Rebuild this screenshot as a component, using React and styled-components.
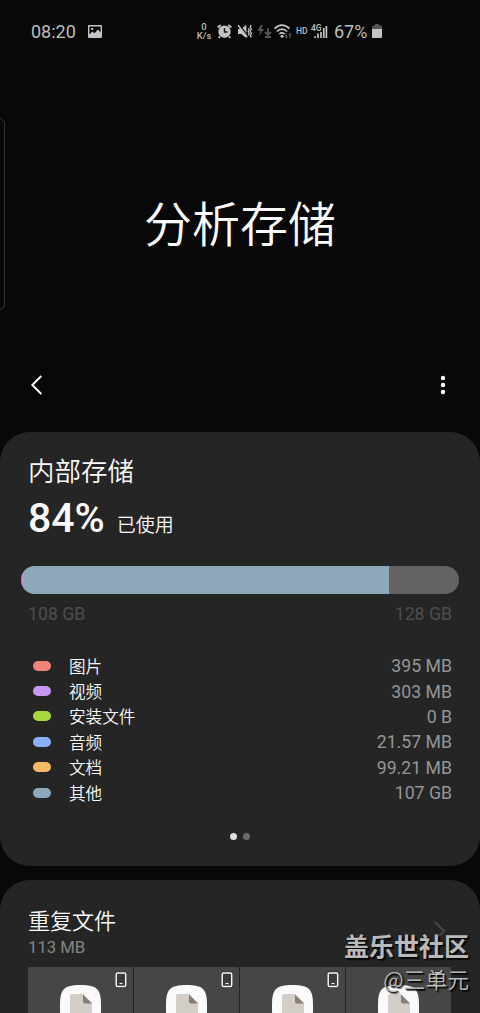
import React from 'react';
import styled, { createGlobalStyle } from 'styled-components';

const Global = createGlobalStyle`
  * { box-sizing: border-box; }
  html, body { margin: 0; background: #080808; }
  body { font-family: Roboto, "Noto Sans CJK SC", sans-serif; color: #fafafa; }
  svg { display: block; flex: none; }
`;

const Screen = styled.div`
  position: relative;
  width: 480px;
  height: 1013px;
  overflow: hidden;
  background: #080808;
  display: flex;
  flex-direction: column;
`;

const StatusBar = styled.header`
  height: 62px;
  flex: none;
  display: flex;
  align-items: center;
  padding-left: 31px;
  color: #bdbdbd;
`;

const StatusText = styled.span`
  width: ${(p) => p.$width}px;
  margin-left: ${(p) => p.$gap || 0}px;
  padding-top: 1px;
  font-size: 18px;
  line-height: 22px;
  white-space: nowrap;
`;

const StatusIcon = styled.svg`
  margin-left: ${(p) => p.$gap || 0}px;
  overflow: visible;
`;

const Speed = styled.span`
  width: 16px;
  margin-left: 94px;
  display: flex;
  flex-direction: column;
  align-items: center;
  font-size: 9.5px;
  line-height: 9px;
  font-weight: 500;
`;

const SpeedLine = styled.span`
  height: 9px;
  overflow: hidden;
`;

const HdLabel = styled.span`
  width: 13px;
  margin-left: 4px;
  font-size: 8.5px;
  line-height: 10px;
  font-weight: 500;
`;

const EdgeHandle = styled.div`
  position: absolute;
  left: -10px;
  top: 118px;
  width: 15px;
  height: 192px;
  border: 1px solid #353535;
  border-radius: 6px;
`;

const Hero = styled.div`
  height: 290px;
  flex: none;
  display: flex;
  justify-content: center;
  padding-top: 129px;
`;

const Title = styled.h1`
  margin: 0;
  font-size: 48px;
  line-height: 70px;
  font-weight: 350;
`;

const Toolbar = styled.nav`
  height: 80px;
  flex: none;
  display: flex;
  align-items: center;
  justify-content: space-between;
  padding: 0 33px 14px 30px;
`;

const Card = styled.section`
  flex: none;
  height: ${(p) => p.$height}px;
  margin-bottom: 14px;
  border-radius: 30px;
  background: #252525;
  padding: ${(p) => p.$top}px 28px 0;
  display: flex;
  flex-direction: column;
`;

const CardTitle = styled.h2`
  margin: 0;
  font-size: ${(p) => p.$size}px;
  line-height: 32px;
  font-weight: 350;
`;

const Usage = styled.div`
  display: flex;
  align-items: baseline;
  height: 55px;
  padding-top: 6px;
`;

const Percent = styled.span`
  font-size: 41px;
  line-height: 48px;
  font-weight: 500;
`;

const UsageNote = styled.span`
  margin-left: 12px;
  font-size: 19px;
  line-height: 24px;
  font-weight: 350;
`;

const Meter = styled.div`
  display: flex;
  flex: none;
  height: 28px;
  margin: 23px -7px 0;
  border-radius: 14px;
  overflow: hidden;
  background: #636363;
`;

const MeterPart = styled.div`
  width: ${(p) => p.$width}px;
  background: ${(p) => p.$color};
`;

const Scale = styled.div`
  display: flex;
  justify-content: space-between;
  margin-top: 9px;
  font-size: 17.7px;
  line-height: 22px;
  color: #4e4e4e;
`;

const Legend = styled.ul`
  list-style: none;
  margin: 28px 0 0;
  padding: 0;
`;

const LegendRow = styled.li`
  display: flex;
  align-items: center;
  height: 25.4px;
`;

const Swatch = styled.span`
  width: 18px;
  height: 10px;
  margin: 0 18px 0 5px;
  border-radius: 5px;
  background: ${(p) => p.$color};
`;

const LegendLabel = styled.span`
  flex: 1;
  padding-top: 4px;
  font-size: 16.6px;
  line-height: 24px;
  font-weight: 350;
`;

const LegendValue = styled.span`
  padding-top: 1px;
  font-size: 17.7px;
  line-height: 24px;
  color: #959595;
`;

const Pager = styled.div`
  display: flex;
  justify-content: center;
  gap: 6px;
  margin-top: 28px;
`;

const Dot = styled.span`
  width: 7px;
  height: 7px;
  border-radius: 50%;
  background: ${(p) => (p.$active ? '#dedede' : '#6b6b6b')};
`;

const CardHeader = styled.div`
  display: flex;
  flex: none;
  justify-content: space-between;
  height: 61px;
`;

const Chevron = styled.svg`
  margin-top: 15px;
`;

const SizeText = styled.div`
  font-size: 16.7px;
  line-height: 20px;
  color: #858585;
`;

const Tiles = styled.div`
  display: grid;
  grid-template-columns: repeat(4, 105px);
  column-gap: 1px;
`;

const Tile = styled.div`
  height: 105px;
  background: #464646;
  display: flex;
  justify-content: center;
  position: relative;
  padding-top: 18px;
`;

const Badge = styled.svg`
  position: absolute;
  top: 4px;
  right: 6px;
`;

const Watermark = styled.div`
  position: absolute;
  right: 11px;
  top: 928px;
  display: flex;
  flex-direction: column;
  align-items: flex-end;
  color: #bababa;
  text-shadow: 1px 1px 1px #000, 2px 2px 1px rgba(0, 0, 0, 0.6);
  font-family: "Noto Sans CJK SC", sans-serif;
  white-space: nowrap;
`;

const Community = styled.strong`
  font-size: 25px;
  line-height: 34px;
  font-weight: 700;
`;

const Author = styled.span`
  font-size: 21.8px;
  line-height: 33px;
  font-weight: 350;
`;

const legend = [
  ['图片', '395 MB', '#f18277'],
  ['视频', '303 MB', '#c798f0'],
  ['安装文件', '0 B', '#a7d83c'],
  ['音频', '21.57 MB', '#8ab0fa'],
  ['文档', '99.21 MB', '#f5ba66'],
  ['其他', '107 GB', '#8da8ba'],
];

function StatusIcons() {
  return (
    <>
      <StatusIcon $gap={13} width="14" height="13" viewBox="0 0 14 13">
        <path fillRule="evenodd" fill="#c4c4c4" d="M1 0h12q1 0 1 1v11q0 1-1 1H1q-1 0-1-1V1q0-1 1-1zM1.400 1.400v8.100l3.100-2.900 2 1.700 3.500-3.700 2.600 2.800v-6zM3.200 3h2v2h-2z" />
      </StatusIcon>
      <Speed><SpeedLine>0</SpeedLine><SpeedLine>K/s</SpeedLine></Speed>
      <StatusIcon $gap={5} width="15" height="15" viewBox="0 0 15 15">
        <circle cx="7.500" cy="7.700" r="6.200" fill="#c4c4c4" />
        <path d="M.7 3.400L3.700.9M14.300 3.400L11.300.9M3 12.300l-1.300 1.500M12 12.300l1.300 1.500" stroke="#c4c4c4" strokeWidth="1.900" />
        <path d="M7.500 4v4h3" fill="none" stroke="#161616" strokeWidth="1.400" />
      </StatusIcon>
      <StatusIcon $gap={6} width="15" height="15" viewBox="0 0 15 15">
        <path d="M0 5h3.300L8.400.8v13.400L3.300 10H0z" fill="#c4c4c4" />
        <path d="M1.200.5l8.500 11.500" stroke="#080808" strokeWidth="1.300" />
        <path d="M0 1.300l9.200 11.600" stroke="#c4c4c4" strokeWidth="1.500" />
        <path d="M10.200 4l1 1.500-1 2 1 2-1 1.800M13.200 1l-1 2 1.200 2-1.200 2.200 1.200 2.200-1.200 2 1.200 2" fill="none" stroke="#c4c4c4" strokeWidth="1.300" />
      </StatusIcon>
      <StatusIcon $gap={4} width="15" height="15" viewBox="0 0 15 15">
        <path d="M3.500 1L.5 7h3L2 12l5-7H4l2-4z" fill="#555" />
        <path d="M11 4v6M8 8l3 3 3-3M8 13h6" fill="none" stroke="#555" strokeWidth="1.900" />
      </StatusIcon>
      <StatusIcon $gap={2} width="18" height="15" viewBox="0 0 18 15">
        <path d="M.5 4.700Q8 -2.300 15.500 4.700M2.800 7.500q5.200-4.800 10.400 0M5.300 10q2.700-2.400 5.400 0" fill="none" stroke="#c4c4c4" strokeWidth="1.600" />
        <circle cx="8" cy="12.300" r="1.500" fill="#c4c4c4" />
        <path d="M12.300 9.500V14m-1.500-1.500 1.500 1.500 1.300-1.500M16 14V9.500m-1.400 1.400L16 9.500l1.400 1.400" stroke="#666" fill="none" />
      </StatusIcon>
      <HdLabel>HD</HdLabel>
      <StatusIcon $gap={2} width="17" height="15" viewBox="0 0 17 15">
        <text x="0" y="7" fill="#c4c4c4" fontFamily="Roboto, sans-serif" fontWeight="500" fontSize="8.500">4G</text>
        <path d="M4 12.200v1.800M7 9.500v4.500M10 8v6M12.800 4v10M15.400 2v12" stroke="#c4c4c4" strokeWidth="1.700" />
      </StatusIcon>
    </>
  );
}

function FileTile() {
  return (
    <Tile>
      <svg width="41" height="44" viewBox="0 0 41 44">
        <path d="M0 20C0 4 4 0 20.500 0S41 4 41 20v4c0 16-4 20-20.500 20S0 40 0 24z" fill="#fafafa" />
        <path d="M12 9h11l9 9v17H10V11q0-2 2-2z" fill="#d2cdc7" />
        <path d="M23 9.500l9 9h-7q-2 0-2-2z" fill="#897c75" />
      </svg>
      <Badge width="12" height="17" viewBox="0 0 12 17">
        <rect x="1.200" y="2" width="9.500" height="13.500" rx="1.500" fill="none" stroke="#202020" strokeWidth="3" opacity=".55" />
        <rect x="1.200" y="2" width="9.500" height="13.500" rx="1.300" fill="#393939" stroke="#f5f5f5" strokeWidth="1.500" />
        <path d="M4.500 12.500h3" stroke="#f5f5f5" strokeWidth="1.200" />
      </Badge>
    </Tile>
  );
}

export default function App() {
  return (
    <Screen>
      <Global />
      <EdgeHandle />
      <StatusBar>
        <StatusText $width={44}>08:20</StatusText>
        <StatusIcons />
        <StatusText $width={33} $gap={6}>67%</StatusText>
        <StatusIcon $gap={5} width="10" height="15" viewBox="0 0 10 15">
          <path d="M3 0h4v1.500h2q1 0 1 1V6H0V2.500q0-1 1-1h2z" fill="#555" />
          <path d="M0 5h10v8q0 1-1 1H1q-1 0-1-1z" fill="#c4c4c4" />
        </StatusIcon>
      </StatusBar>
      <Hero><Title>分析存储</Title></Hero>
      <Toolbar>
        <svg width="13" height="20" viewBox="0 0 13 20">
          <path d="M11.300 1L2.300 10l9 9" fill="none" stroke="#fff" strokeWidth="1.900" />
        </svg>
        <svg width="8" height="20" viewBox="0 0 8 20" fill="#fff">
          <circle cx="4" cy="3" r="2.200" /><circle cx="4" cy="10" r="2.200" /><circle cx="4" cy="17" r="2.200" />
        </svg>
      </Toolbar>
      <Card $height={434} $top={24}>
        <CardTitle $size={26.5}>内部存储</CardTitle>
        <Usage>
          <Percent>84%</Percent>
          <UsageNote>已使用</UsageNote>
        </Usage>
        <Meter>
          <MeterPart $width={1} $color="#d9706f" />
          <MeterPart $width={1} $color="#c798d8" />
          <MeterPart $width={366} $color="#8da8ba" />
        </Meter>
        <Scale><span>108 GB</span><span>128 GB</span></Scale>
        <Legend>
          {legend.map(([label, value, color]) => (
            <LegendRow key={label}>
              <Swatch $color={color} />
              <LegendLabel>{label}</LegendLabel>
              <LegendValue>{value}</LegendValue>
            </LegendRow>
          ))}
        </Legend>
        <Pager><Dot $active /><Dot /></Pager>
      </Card>
      <Card $height={180} $top={26}>
        <CardHeader>
          <div>
            <CardTitle $size={22}>重复文件</CardTitle>
            <SizeText>113 MB</SizeText>
          </div>
          <Chevron width="20" height="20" viewBox="0 0 20 20">
            <path d="M3 1l9 9-9 9" fill="none" stroke="#484848" strokeWidth="1.900" />
          </Chevron>
        </CardHeader>
        <Tiles><FileTile /><FileTile /><FileTile /><FileTile /></Tiles>
      </Card>
      <Watermark>
        <Community>盖乐世社区</Community>
        <Author>@三单元</Author>
      </Watermark>
    </Screen>
  );
}
